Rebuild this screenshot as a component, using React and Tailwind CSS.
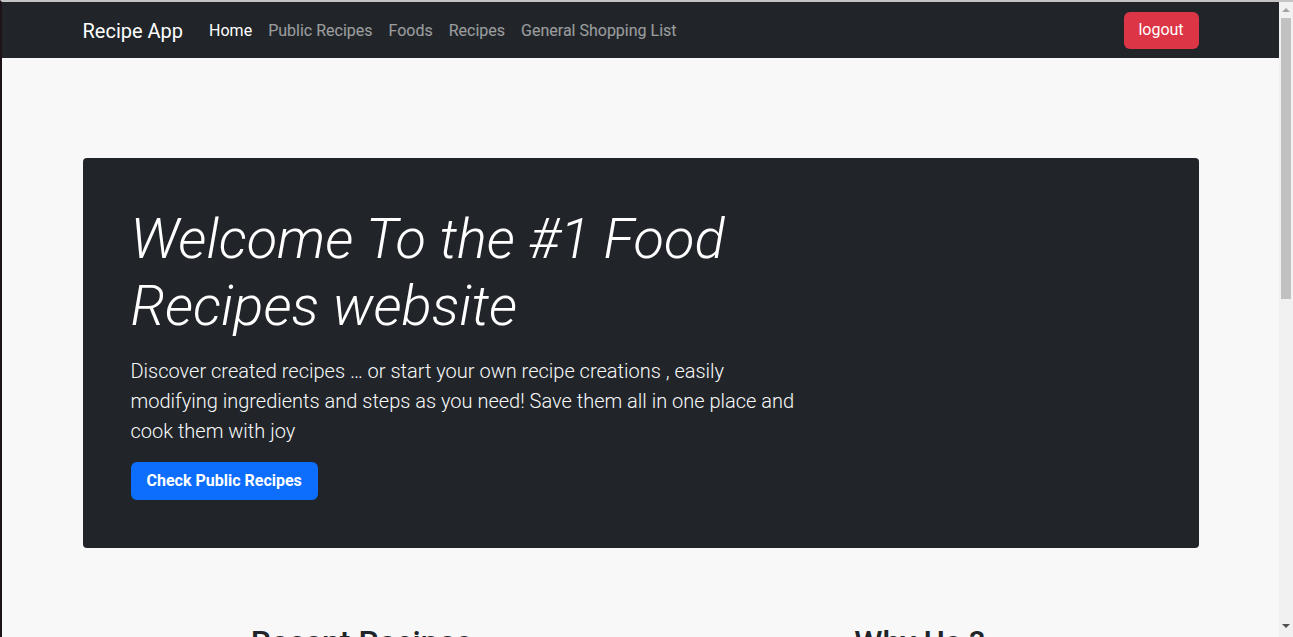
import React from 'react';

const links = ['Public Recipes', 'Foods', 'Recipes', 'General Shopping List'];

const Navbar = () => (
  <nav className="bg-[#212529] h-14 shrink-0">
    <div className="w-[1116px] mx-auto h-full flex items-center">
      <a className="text-white text-[20px] mr-[18px] pt-[2px]">Recipe App</a>
      <ul className="flex items-center pt-[2px]">
        <li className="px-2 text-white text-base">Home</li>
        {links.map((link) => (
          <li key={link} className="px-2 text-base text-white/55">
            {link}
          </li>
        ))}
      </ul>
      <button className="ml-auto bg-[#dc3545] text-white text-base w-[75px] h-[37px] rounded-md">logout</button>
    </div>
  </nav>
);

const Hero = () => (
  <div className="w-[1116px] mx-auto mt-[100px] bg-[#212529] rounded p-12">
    <div className="w-[680px]">
      {/* Title */}
      <h1 className="text-white text-[56px] leading-[1.2] font-light italic mb-4">
        Welcome To the #1 Food Recipes website
      </h1>
      {/* Description */}
      <p className="text-[#f8f9fa] text-[20px] leading-[30px] font-light mb-4">
        Discover created recipes … or start your own recipe creations , easily modifying ingredients and steps as you
        need! Save them all in one place and cook them with joy
      </p>
      <button className="bg-[#0d6efd] text-white font-bold text-base h-[38px] px-4 rounded-md">
        Check Public Recipes
      </button>
    </div>
  </div>
);

const Scrollbar = () => (
  <div className="w-[14px] shrink-0 bg-[#f1f1f1] flex flex-col items-center">
    <div className="h-[15px] flex items-center justify-center">
      <div className="w-0 h-0 border-l-[4px] border-r-[4px] border-b-[4px] border-l-transparent border-r-transparent border-b-[#a3a3a3]"></div>
    </div>
    <div className="w-[10px] h-[281px] bg-[#c1c1c1] mt-[1px]"></div>
    <div className="mt-auto h-[15px] flex items-center justify-center mb-[4px]">
      <div className="w-0 h-0 border-l-[4px] border-r-[4px] border-t-[4px] border-l-transparent border-r-transparent border-t-[#505050]"></div>
    </div>
  </div>
);

export default function App() {
  return (
    <div
      className="h-[637px] overflow-hidden flex border-l-2 border-l-[#1e1319] border-t-2 border-t-[#c4c4c4] bg-[#f8f8f8]"
      style={{ fontFamily: 'Roboto, "Liberation Sans", sans-serif' }}
    >
      <div className="flex-1 flex flex-col overflow-hidden">
        <Navbar />
        <Hero />
        {/* Lower sections */}
        <div className="w-[1116px] mx-auto mt-[75px] grid grid-cols-2">
          <h2 className="text-center text-[32px] font-medium text-[#212529] leading-[1.2]">Recent Recipes</h2>
          <h2 className="text-center text-[32px] font-medium text-[#212529] leading-[1.2]">Why Us ?</h2>
        </div>
      </div>
      <Scrollbar />
    </div>
  );
}
